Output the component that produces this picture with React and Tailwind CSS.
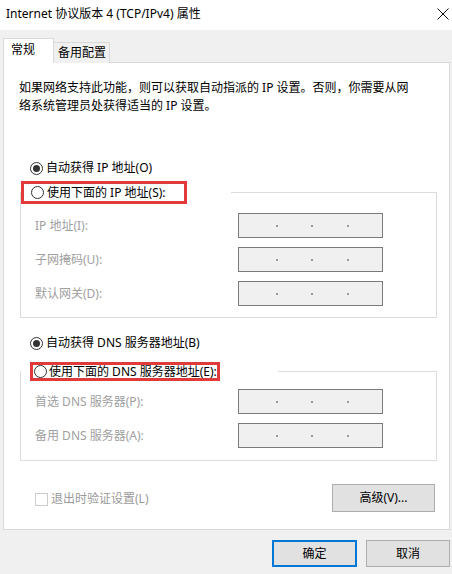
import React from 'react'

const font = { fontFamily: '"Noto Sans", "Noto Sans CJK SC", sans-serif' }

const Radio = ({ checked }) => (
  <span className="w-[13px] h-[13px] rounded-full border border-[#333333] bg-white flex items-center justify-center flex-shrink-0">
    {checked && <span className="w-[7px] h-[7px] rounded-full bg-[#333333]" />}
  </span>
)

const IpBox = () => (
  <div className="w-[145px] h-[25px] border border-[#7a7a7a] bg-[#f0f0f0] relative">
    <span className="absolute left-[37px] top-[11px] w-[2px] h-[2px] bg-[#9a9a9a]" />
    <span className="absolute left-[72px] top-[11px] w-[2px] h-[2px] bg-[#9a9a9a]" />
    <span className="absolute left-[108px] top-[11px] w-[2px] h-[2px] bg-[#9a9a9a]" />
  </div>
)

const FieldRow = ({ label }) => (
  <div className="flex items-center">
    <span className="w-[203px] text-[#a0a0a0] leading-[18px]">{label}</span>
    <IpBox />
  </div>
)

const App = () => {
  return (
    <div className="w-[452px] h-[574px] bg-[#f0f0f0] text-[12px] text-black flex flex-col overflow-hidden" style={font}>
      {/* Title bar */}
      <div className="h-[30px] bg-white flex items-center justify-between pl-[6px] pr-[3px] flex-shrink-0">
        <span className="leading-[18px] pb-[2px]">Internet 协议版本 4 (TCP/IPv4) 属性</span>
        <svg width="12" height="12" viewBox="0 0 12 12" className="mb-[2px]">
          <path d="M0.5 0.5 L11.5 11.5 M11.5 0.5 L0.5 11.5" stroke="#111" strokeWidth="1" fill="none" />
        </svg>
      </div>

      <div className="pl-[3px] pr-[2px] pt-[8px] flex flex-col">
        {/* Tabs */}
        <div className="flex items-end -mb-px relative z-10">
          <div className="w-[51px] h-[25px] bg-white border border-b-0 border-[#d9d9d9] pl-[7px] pt-[3px] leading-[16px]">常规</div>
          <div className="w-[56px] h-[21px] bg-[#f0f0f0] border border-l-0 border-b-0 border-[#d9d9d9] pl-[4px] pt-[2px] leading-[16px]">备用配置</div>
        </div>

        {/* Panel */}
        <div className="bg-white border border-[#d9d9d9] px-[15px] pt-[16px] pb-[17px] h-[468px]">
          <p className="leading-[18px]">
            如果网络支持此功能，则可以获取自动指派的 IP 设置。否则，你需要从网<br />
            络系统管理员处获得适当的 IP 设置。
          </p>

          <div className="mt-[44px] ml-[11px] flex items-center gap-[3px] leading-[18px]">
            <Radio checked />
            <span>自动获得 IP 地址(O)</span>
          </div>

          <fieldset className="mt-[4px] ml-[1px] w-[417px] border border-[#dcdcdc] pb-[11px]">
            <legend className="pr-[44px]">
              <div className="w-[166px] h-[23px] border-[3px] border-[#e03a3a] pl-[7px] flex items-center gap-[3px] leading-[17px]">
                <Radio />
                <span>使用下面的 IP 地址(S):</span>
              </div>
            </legend>
            <div className="px-[14px] pt-[9px] flex flex-col gap-[9px]">
              <FieldRow label="IP 地址(I):" />
              <FieldRow label="子网掩码(U):" />
              <FieldRow label="默认网关(D):" />
            </div>
          </fieldset>

          <div className="mt-[16px] ml-[11px] flex items-center gap-[3px] leading-[18px]">
            <Radio checked />
            <span>自动获得 DNS 服务器地址(B)</span>
          </div>

          <fieldset className="mt-[10px] ml-[1px] w-[417px] border border-[#dcdcdc] pb-[12px]">
            <legend className="pr-[58px]">
              <div className="ml-[9px] w-[190px] h-[19px] border-[3px] border-[#e03a3a] pl-[1px] flex items-center gap-[2px] leading-[13px] whitespace-nowrap">
                <Radio />
                <span>使用下面的 DNS 服务器地址(E):</span>
              </div>
            </legend>
            <div className="px-[14px] pt-[8px] flex flex-col gap-[9px]">
              <FieldRow label="首选 DNS 服务器(P):" />
              <FieldRow label="备用 DNS 服务器(A):" />
            </div>
          </fieldset>

          <div className="mt-[23px] flex justify-between mr-[-1px]">
            <div className="ml-[16px] pt-[2px] flex items-center gap-[3px] leading-[18px]">
              <span className="w-[13px] h-[13px] border border-[#cccccc] bg-white" />
              <span className="text-[#9a9a9a]">退出时验证设置(L)</span>
            </div>
            <button className="w-[103px] h-[28px] bg-[#e1e1e1] border border-[#adadad] leading-[18px]">高级(V)...</button>
          </div>
        </div>

        {/* Dialog buttons */}
        <div className="mt-[10px] flex justify-end gap-[9px]">
          <button className="w-[85px] h-[27px] bg-[#e1e1e1] border-2 border-[#0078d7] leading-[18px]">确定</button>
          <button className="w-[84px] h-[27px] bg-[#e1e1e1] border border-[#adadad] leading-[18px]">取消</button>
        </div>
      </div>
    </div>
  )
}

export default App
